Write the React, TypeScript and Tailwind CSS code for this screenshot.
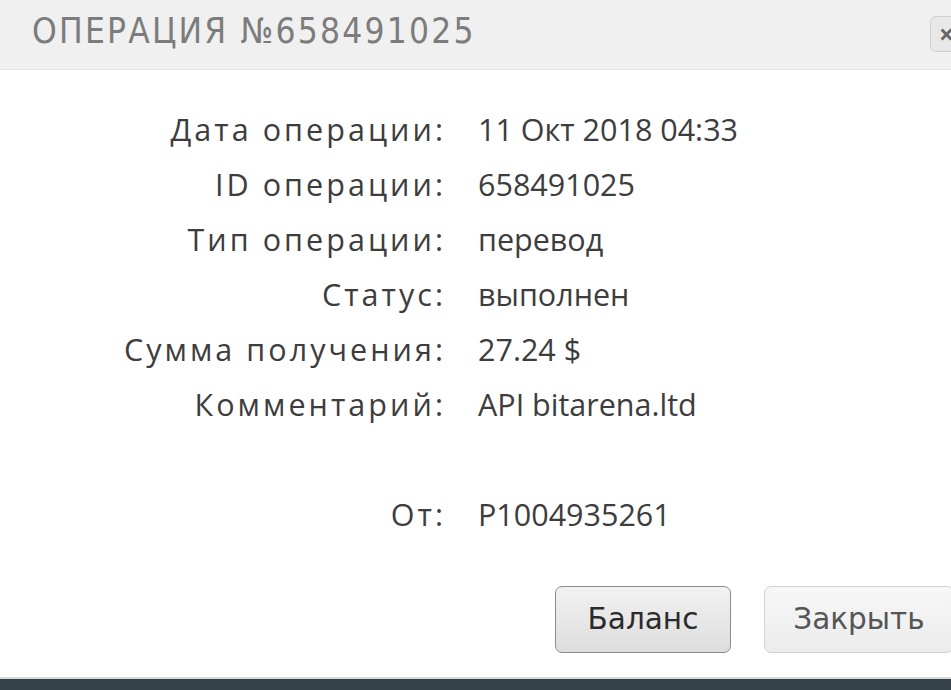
import React from 'react';

const rows: [string, string][] = [
  ['Дата операции:', '11 Окт 2018 04:33'],
  ['ID операции:', '658491025'],
  ['Тип операции:', 'перевод'],
  ['Статус:', 'выполнен'],
  ['Сумма получения:', '27.24 $'],
  ['Комментарий:', 'API bitarena.ltd'],
  ['', ''],
  ['От:', 'P1004935261'],
];

export default function App() {
  return (
    <div className="w-[951px] h-[690px] overflow-hidden bg-white flex flex-col" style={{ fontFamily: '"Open Sans", "Noto Sans", sans-serif' }}>
      <div className="h-[70px] shrink-0 bg-[#f0f0f0] border-b border-[#e6e6e6] flex items-center justify-between pl-[32px] pb-[6px]">
        <h1 className="text-[35px] leading-none tracking-[0.063em] text-[#7c7c7c] font-normal" style={{ fontFamily: '"DejaVu Sans Condensed", "DejaVu Sans", sans-serif' }}>
          ОПЕРАЦИЯ №658491025
        </h1>
        <button className="w-[40px] h-[36px] mr-[-19px] mt-[4px] rounded-[6px] border border-[#cfcfcf] bg-[#e8e8e8] text-[#666] text-[26px] font-bold flex items-center pl-[8px] leading-none">
          ×
        </button>
      </div>

      <div className="pt-[32px] grid grid-cols-[443px_1fr] gap-x-[35px] text-[30.5px] text-[#3d3d3d]">
        {rows.map(([label, value], i) => (
          <React.Fragment key={i}>
            <div className="h-[55px] flex items-center justify-end tracking-[0.1em] mr-[-3px]">{label}</div>
            <div className="h-[55px] flex items-center">{value}</div>
          </React.Fragment>
        ))}
      </div>

      <div className="flex gap-[33px] pl-[555px] mt-[44px]" style={{ fontFamily: '"DejaVu Sans", sans-serif' }}>
        <button className="w-[176px] h-[67px] shrink-0 rounded-[7px] border border-[#8c8c8c] bg-gradient-to-b from-[#f2f2f2] to-[#dddddd] text-[29.5px] text-[#2b2b2b]">
          Баланс
        </button>
        <button className="w-[190px] h-[67px] shrink-0 rounded-[7px] border border-[#d2d2d2] bg-gradient-to-b from-[#f7f7f7] to-[#ececec] text-[29.5px] text-[#555]">
          Закрыть
        </button>
      </div>

      <div className="mt-auto h-[13px] bg-[#36424a] border-t-2 border-[#d8d8d8]" />
    </div>
  );
}
